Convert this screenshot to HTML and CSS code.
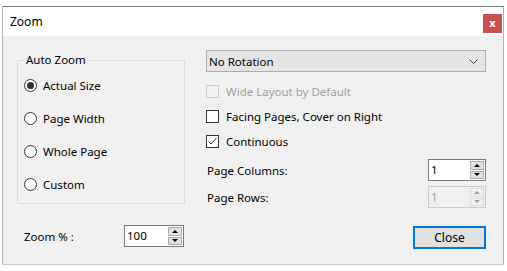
FILE: index.html
```html
<!DOCTYPE html>
<html lang="en">
<head>
    <meta charset="UTF-8">
    <title>Zoom</title>
    <link rel="stylesheet" href="styles.css">
</head>
<body>
    <div class="window">
        <div class="titlebar">
            <span class="title">Zoom</span>
            <span class="close-x">x</span>
        </div>

        <div class="content">
            <div class="left">
                <fieldset class="group">
                    <legend>Auto Zoom</legend>
                    <div class="radio checked"><span class="circle"></span>Actual Size</div>
                    <div class="radio"><span class="circle"></span>Page Width</div>
                    <div class="radio"><span class="circle"></span>Whole Page</div>
                    <div class="radio"><span class="circle"></span>Custom</div>
                </fieldset>

                <div class="zoom-row">
                    <span class="zoom-label">Zoom % :</span>
                    <div class="spin dark">
                        <span class="spin-value">100</span>
                        <div class="spin-btns">
                            <span class="spin-btn"><i class="tri up"></i></span>
                            <span class="spin-btn"><i class="tri down"></i></span>
                        </div>
                    </div>
                </div>
            </div>

            <div class="right">
                <div class="select">
                    <span>No Rotation</span>
                    <svg width="9" height="5" viewBox="0 0 9 5"><polyline points="0.5,0.5 4.5,4.5 8.5,0.5" fill="none" stroke="#444" stroke-width="1"/></svg>
                </div>

                <div class="check disabled"><span class="box"></span>Wide Layout by Default</div>
                <div class="check"><span class="box"></span>Facing Pages, Cover on Right</div>
                <div class="check"><span class="box"><svg width="11" height="11" viewBox="0 0 11 11"><polyline points="1.5,5.5 4,8 9.5,2" fill="none" stroke="#333" stroke-width="1"/></svg></span>Continuous</div>

                <div class="field-row first">
                    <span>Page Columns:</span>
                    <div class="spin">
                        <span class="spin-value">1</span>
                        <div class="spin-btns">
                            <span class="spin-btn"><i class="tri up"></i></span>
                            <span class="spin-btn"><i class="tri down"></i></span>
                        </div>
                    </div>
                </div>
                <div class="field-row">
                    <span>Page Rows:</span>
                    <div class="spin disabled">
                        <span class="spin-value">1</span>
                        <div class="spin-btns">
                            <span class="spin-btn"><i class="tri up"></i></span>
                            <span class="spin-btn"><i class="tri down"></i></span>
                        </div>
                    </div>
                </div>

                <div class="actions">
                    <button class="btn">Close</button>
                </div>
            </div>
        </div>
    </div>
</body>
</html>
```

FILE: styles.css
```css
* {
    margin: 0;
    padding: 0;
    box-sizing: border-box;
}

body {
    font-family: "Noto Sans", "Open Sans", sans-serif;
    font-size: 11.5px;
    color: #000;
    background: #fff;
}

.window {
    margin: 6px 0 0 2px;
    width: 502px;
    height: 259px;
    border: 1px solid #b4b4b4;
    border-top-color: #7a7a7a;
    border-bottom-color: #c8c8c8;
    display: flex;
    flex-direction: column;
}

.titlebar {
    height: 29px;
    background: #fff;
    display: flex;
    justify-content: space-between;
    align-items: flex-start;
    padding: 0 1px 0 7px;
}

.title {
    font-size: 12px;
    line-height: 29px;
}

.close-x {
    width: 19px;
    height: 19px;
    margin-top: 7px;
    background: #c75050;
    color: #fff;
    font-weight: bold;
    font-size: 11px;
    line-height: 18px;
    text-align: center;
}

.content {
    flex: 1;
    background: #f0f0f0;
    display: flex;
    gap: 21px;
    padding: 14px 0 0 14px;
}

.left {
    width: 168px;
    display: flex;
    flex-direction: column;
}

.group {
    border: 1px solid #dcdcdc;
    padding: 0 0 7px 6px;
    display: flex;
    flex-direction: column;
    gap: 9px;
}

.group legend {
    padding: 0 2px;
    line-height: 20px;
}

.radio {
    height: 24px;
    display: flex;
    align-items: center;
}

.radio:first-of-type {
    margin-top: 3px;
}

.circle {
    width: 13px;
    height: 13px;
    border: 1px solid #333;
    border-radius: 50%;
    background: #fff;
    margin-right: 6px;
    display: flex;
    align-items: center;
    justify-content: center;
}

.radio.checked .circle::after {
    content: "";
    width: 7px;
    height: 7px;
    border-radius: 50%;
    background: #333;
}

.zoom-row {
    margin-top: 21px;
    padding-left: 7px;
    display: flex;
    align-items: center;
}

.zoom-label {
    width: 100px;
}

.right {
    width: 280px;
    display: flex;
    flex-direction: column;
}

.select {
    height: 22px;
    border: 1px solid #adadad;
    background: #e5e5e5;
    padding: 0 7px 0 2px;
    display: flex;
    justify-content: space-between;
    align-items: center;
    margin-bottom: 7px;
}

.check {
    height: 24px;
    display: flex;
    align-items: center;
}

.check + .check {
    margin-top: 1px;
}

.box {
    width: 13px;
    height: 13px;
    border: 1px solid #333;
    background: #fff;
    margin-right: 7px;
    display: flex;
    align-items: center;
    justify-content: center;
}

.check.disabled {
    color: #a0a0a0;
}

.check.disabled .box {
    border-color: #cccccc;
    background: #f0f0f0;
}

.field-row {
    height: 22px;
    display: flex;
    justify-content: space-between;
    align-items: center;
    padding-left: 1px;
    margin-top: 5px;
}

.field-row.first {
    margin-top: 6px;
}

.spin {
    width: 58px;
    height: 22px;
    border: 1px solid #7a7a7a;
    background: #fff;
    display: flex;
}

.spin.dark {
    width: 60px;
}

.spin-value {
    flex: 1;
    padding-left: 2px;
    line-height: 20px;
}

.spin-btns {
    display: flex;
    flex-direction: column;
    gap: 1px;
    padding: 1px 1px 1px 0;
}

.spin-btn {
    flex: 1;
    width: 14px;
    border: 1px solid #adadad;
    background: #e1e1e1;
    display: flex;
    align-items: center;
    justify-content: center;
}

.tri {
    width: 0;
    height: 0;
    border-left: 3px solid transparent;
    border-right: 3px solid transparent;
}

.tri.up {
    border-bottom: 3px solid #000;
}

.tri.down {
    border-top: 3px solid #000;
}

.spin.disabled {
    border-color: #cccccc;
    background: #f0f0f0;
    color: #a0a0a0;
}

.spin.disabled .spin-btn {
    border-color: #dcdcdc;
    background: #f0f0f0;
}

.spin.disabled .tri.up {
    border-bottom-color: #a0a0a0;
}

.spin.disabled .tri.down {
    border-top-color: #a0a0a0;
}

.actions {
    margin-top: 18px;
    display: flex;
    justify-content: flex-end;
}

.btn {
    width: 73px;
    height: 23px;
    border: 2px solid #0078d7;
    background: #e1e1e1;
    font-family: inherit;
    font-size: 12px;
    color: #000;
}
```
